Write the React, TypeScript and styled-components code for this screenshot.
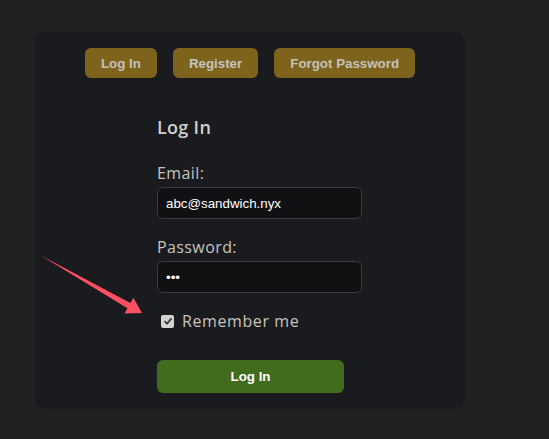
import React from 'react';
import styled, { createGlobalStyle } from 'styled-components';

const GlobalStyle = createGlobalStyle`
  body {
    margin: 0;
    background-color: #202123;
    font-family: 'Open Sans', sans-serif;
  }
`;

const Page = styled.div`
  position: relative;
  padding: 32px 0 0 35px;
  min-height: 439px;
  box-sizing: border-box;
`;

const Card = styled.div`
  width: 430px;
  background-color: #1a1b1e;
  border-radius: 10px;
  padding: 16px 0 16px;
  box-sizing: border-box;
`;

const Nav = styled.nav`
  display: flex;
  justify-content: center;
  gap: 16px;
`;

const NavButton = styled.button`
  height: 30px;
  padding: 0 16px;
  border: none;
  border-radius: 6px;
  background-color: #7d631b;
  color: #c4c2bc;
  font-family: 'Liberation Sans', Arial, sans-serif;
  font-weight: bold;
  font-size: 13.333px;
`;

const Form = styled.form`
  width: 205px;
  margin: 36px 0 0 122px;
  display: flex;
  flex-direction: column;
`;

const Title = styled.h2`
  margin: 0 0 20px;
  font-size: 18px;
  line-height: 27px;
  font-weight: 600;
  letter-spacing: 0.3px;
  color: #d2d0cc;
`;

const Field = styled.div`
  display: flex;
  flex-direction: column;
  gap: 2px;
  margin-bottom: 16px;
`;

const Label = styled.label`
  font-size: 16px;
  line-height: 24px;
  letter-spacing: 0.4px;
  color: #c6c4bf;
`;

const Input = styled.input`
  height: 32px;
  box-sizing: border-box;
  width: 100%;
  padding: 0 8px;
  background-color: #111113;
  border: 1px solid #3b3c3f;
  border-radius: 6px;
  color: #ffffff;
  font-family: 'Liberation Sans', Arial, sans-serif;
  font-size: 13.333px;
  outline: none;
`;

const CheckRow = styled.label`
  display: flex;
  align-items: center;
  gap: 8px;
  height: 24px;
  padding-left: 4px;
  font-size: 16px;
  letter-spacing: 0.6px;
  color: #c6c4bf;
`;

const Check = styled.span`
  width: 13px;
  height: 13px;
  border-radius: 2px;
  background-color: #d3d3d3;
  display: flex;
  align-items: center;
  justify-content: center;
`;

const Submit = styled.button`
  margin-top: 27px;
  width: 187px;
  height: 33px;
  border: none;
  border-radius: 6px;
  background-color: #416b1d;
  color: #ffffff;
  font-family: 'Liberation Sans', Arial, sans-serif;
  font-weight: bold;
  font-size: 13.333px;
`;

const Annotation = styled.svg`
  position: absolute;
  left: 0;
  top: 0;
  pointer-events: none;
`;

export default function App() {
  return (
    <Page>
      <GlobalStyle />
      <Card>
        <Nav>
          <NavButton type="button">Log In</NavButton>
          <NavButton type="button">Register</NavButton>
          <NavButton type="button">Forgot Password</NavButton>
        </Nav>
        <Form onSubmit={e => e.preventDefault()}>
          <Title>Log In</Title>
          <Field>
            <Label>Email:</Label>
            <Input type="text" defaultValue="abc@sandwich.nyx" />
          </Field>
          <Field>
            <Label>Password:</Label>
            <Input type="password" defaultValue="abc" />
          </Field>
          <CheckRow>
            <Check>
              <svg width="10" height="10" viewBox="0 0 10 10">
                <path d="M1.5 5.2 L4 7.6 L8.6 2.4" fill="none" stroke="#3a3a3a" strokeWidth="1.8" />
              </svg>
            </Check>
            Remember me
          </CheckRow>
          <Submit type="submit">Log In</Submit>
        </Form>
      </Card>
      <Annotation width="549" height="439" viewBox="0 0 549 439">
        <polygon
          points="40,255 130.4,303 133.4,297.8 142,313 124.5,313.4 127.5,308.2"
          fill="#ff4f60"
        />
      </Annotation>
    </Page>
  );
}
